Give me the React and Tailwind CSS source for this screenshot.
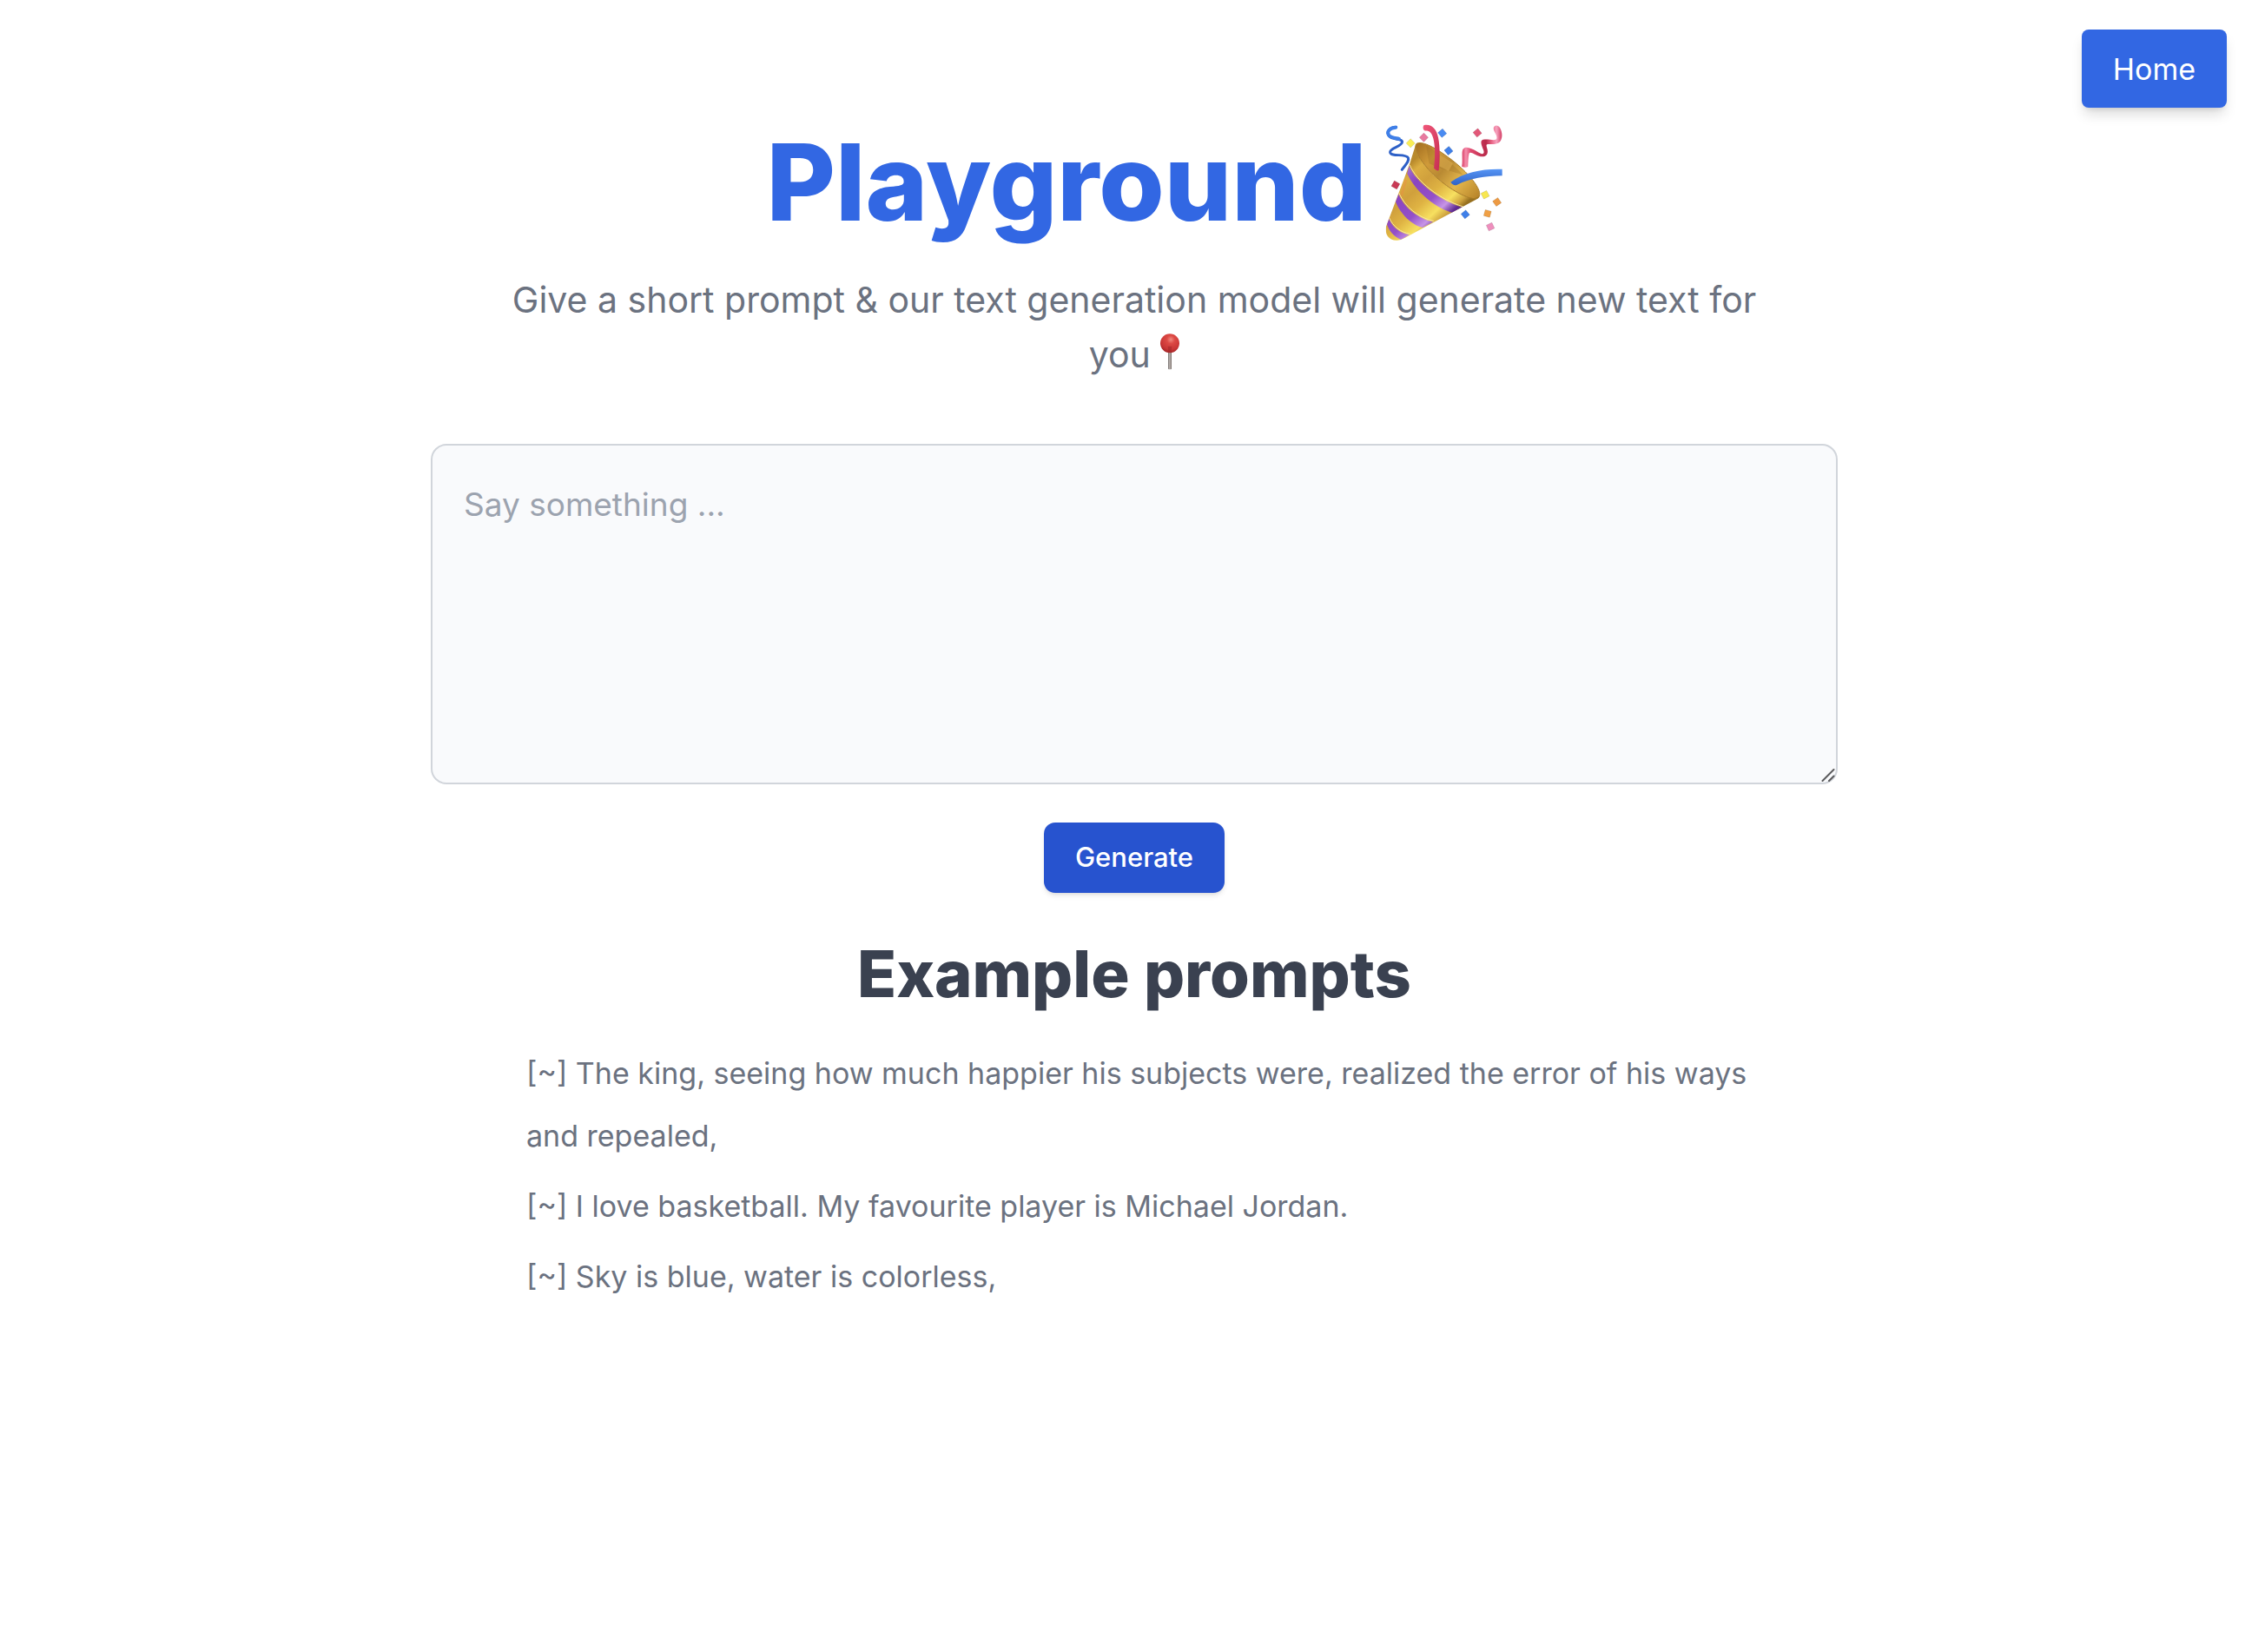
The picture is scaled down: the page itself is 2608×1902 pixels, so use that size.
const EXAMPLES = [
  "[~] The king, seeing how much happier his subjects were, realized the error of his ways and repealed,",
  "[~] I love basketball. My favourite player is Michael Jordan.",
  "[~] Sky is blue, water is colorless,",
];

const CONFETTI = [
  [198, 135, "#f9ee55", 45],
  [244, 115, "#e8799f", 45],
  [308, 100, "#4a8bf2", 50],
  [330, 161, "#3f7fe8", 50],
  [430, 99, "#e25878", 50],
  [146, 280, "#c93a56", 30],
  [457, 314, "#f8e750", 62],
  [498, 339, "#ed9a43", 55],
  [465, 379, "#f0a045", 15],
  [388, 382, "#3f7fe8", 50],
  [475, 425, "#ee8fbd", 65],
];

function PartyPopper() {
  return (
    <svg role="img" aria-label="party popper" viewBox="108 66 408 410" className="size-[136px] shrink-0">
      <defs>
        <linearGradient id="gold" gradientUnits="userSpaceOnUse" x1="150" y1="250" x2="308" y2="420">
          <stop offset="0" stopColor="#b98a2c" />
          <stop offset="0.12" stopColor="#dcae42" />
          <stop offset="0.34" stopColor="#d0a03c" />
          <stop offset="0.55" stopColor="#dfb343" />
          <stop offset="0.78" stopColor="#f7e060" />
          <stop offset="0.92" stopColor="#cfa33e" />
          <stop offset="1" stopColor="#97701f" />
        </linearGradient>
        <linearGradient id="inside" gradientUnits="userSpaceOnUse" x1="225" y1="140" x2="430" y2="320">
          <stop offset="0" stopColor="#a87322" />
          <stop offset="0.25" stopColor="#cf9a39" />
          <stop offset="0.45" stopColor="#b98a33" />
          <stop offset="0.7" stopColor="#e3b64b" />
          <stop offset="1" stopColor="#b9862b" />
        </linearGradient>
        <linearGradient id="violet" gradientUnits="userSpaceOnUse" x1="150" y1="250" x2="308" y2="420">
          <stop offset="0" stopColor="#a272cf" />
          <stop offset="0.25" stopColor="#8a45c0" />
          <stop offset="0.6" stopColor="#9450c8" />
          <stop offset="0.8" stopColor="#c795e6" />
          <stop offset="0.95" stopColor="#5f2a92" />
        </linearGradient>
        <linearGradient id="blueWave" x1="0" y1="0" x2="0" y2="1">
          <stop offset="0" stopColor="#5695f5" />
          <stop offset="1" stopColor="#2f62c6" />
        </linearGradient>
        <linearGradient id="redWave" x1="0" y1="0" x2="1" y2="1">
          <stop offset="0" stopColor="#f0577a" />
          <stop offset="1" stopColor="#c72f52" />
        </linearGradient>
        <linearGradient id="pinkWave" gradientUnits="userSpaceOnUse" x1="376" y1="0" x2="516" y2="0">
          <stop offset="0" stopColor="#d93a61" />
          <stop offset="0.1" stopColor="#f48fae" />
          <stop offset="0.22" stopColor="#e0496e" />
          <stop offset="0.6" stopColor="#b92a4a" />
          <stop offset="0.75" stopColor="#ec6a8b" />
          <stop offset="0.86" stopColor="#f6a3bf" />
          <stop offset="1" stopColor="#d23a60" />
        </linearGradient>
        <clipPath id="cone">
          <path d="M217 138C212 150 204 178 196 204L113 424C108 452 122 474 152 472C164 471 178 464 190 457L424 331C433 327 439 322 437 314C428 346 345 306 286 252C240 210 208 160 217 138Z" />
        </clipPath>
      </defs>

      <path d="M217 138C229 126 268 140 318 176C385 222 446 290 437 318C428 346 345 306 286 252C240 210 208 160 217 138Z" fill="url(#inside)" />
      <path d="M252 143C300 170 350 212 380 245C350 235 300 225 262 205Z" fill="#8f6321" opacity="0.25" />
      <path d="M300 175L345 205L330 232L298 215Z" fill="#e3b454" opacity="0.5" />

      <g clipPath="url(#cone)">
        <rect x="100" y="120" width="350" height="360" fill="url(#gold)" />
        <path d="M193 214C215 270 300 335 378 358L350 378C290 364 215 305 186 240Z" fill="url(#violet)" />
        <path d="M156 312C175 358 225 398 276 408L240 428C205 420 165 385 146 338Z" fill="url(#violet)" />
        <path d="M123 397C134 426 162 448 194 453L165 470C140 460 122 438 116 416Z" fill="url(#violet)" />
        <path d="M195 210C217 267 302 332 380 355M158 308C177 355 227 395 278 405M124 394C136 423 164 445 196 450" fill="none" stroke="#f7e7a4" strokeWidth="3" />
        <path d="M182 262L166 318" stroke="#ee8742" strokeWidth="9" opacity="0.35" />
      </g>
      <path d="M217 138C208 160 240 210 286 252C345 306 428 346 437 318C446 290 385 222 318 176C268 140 229 126 217 138Z" fill="none" stroke="#a87c26" strokeWidth="3" />

      <path d="M245 72C270 67 288 84 294 116C301 150 299 192 296 229C292 232 286 228 279 222C284 180 283 143 277 119C271 97 263 91 248 92C240 88 240 76 245 72Z" fill="url(#redWave)" />
      <path d="M337 270C385 235 447 223 516 225V248C455 249 405 257 360 279C351 284 343 278 337 270Z" fill="url(#blueWave)" />

      <path d="M148 79C126 80 113 94 122 109C133 126 168 116 169 130C169 147 125 151 127 166C130 185 181 168 190 186C194 198 180 210 168 227" fill="none" stroke="#2d60c7" strokeWidth="9" strokeLinecap="round" strokeLinejoin="round" />
      <path d="M147 80C126 81 115 94 122 106C129 117 146 117 158 120" fill="none" stroke="#3f7fe8" strokeWidth="12" strokeLinecap="round" />

      <path d="M376 216C380 194 374 165 380 156C390 140 418 158 440 170C450 175 455 170 451 159C442 137 437 123 455 122C476 121 494 129 497 118C499 105 487 97 486 84C486 71 502 70 508 81C517 96 518 119 508 130C495 143 472 136 463 139C457 143 470 159 464 172C457 185 439 183 426 176C412 168 404 164 401 171C398 184 398 203 397 217C390 220 382 219 376 216Z" fill="url(#pinkWave)" />

      {CONFETTI.map(([x, y, color, angle]) => (
        <g key={`${x}-${y}`} transform={`translate(${x} ${y}) rotate(${angle})`}>
          <rect x="-11" y="-11" width="22" height="22" rx="1" fill={color} stroke="#000" strokeOpacity="0.15" strokeWidth="2" />
        </g>
      ))}
    </svg>
  );
}

function RoundPin() {
  return (
    <svg role="img" aria-label="round pushpin" viewBox="0 0 66 126" className="inline-block h-[42px] w-[22px] align-[-3px]">
      <defs>
        <radialGradient id="ball" cx="0.55" cy="0.3" r="0.7">
          <stop offset="0" stopColor="#f08a80" />
          <stop offset="0.3" stopColor="#dd4a45" />
          <stop offset="0.75" stopColor="#c93636" />
          <stop offset="1" stopColor="#a32426" />
        </radialGradient>
        <linearGradient id="needle">
          <stop offset="0" stopColor="#6f6a68" />
          <stop offset="0.5" stopColor="#c4bdb9" />
          <stop offset="1" stopColor="#6b5f5b" />
        </linearGradient>
      </defs>
      <rect x="27" y="60" width="12" height="64" rx="3" fill="url(#needle)" />
      <circle cx="33" cy="34" r="33" fill="url(#ball)" />
      <path d="M26 44H40L38 62H28Z" fill="#9c2427" opacity="0.5" />
    </svg>
  );
}

function ResizeGrip() {
  return (
    <svg aria-hidden="true" viewBox="0 0 16 16" className="pointer-events-none absolute right-[3px] bottom-[3px] size-4">
      <path d="M1.5 15L14.5 2M9 15L14.5 9.5" fill="none" stroke="#5a5a5c" strokeWidth="2" strokeLinecap="round" />
    </svg>
  );
}

export default function App() {
  return (
    <div className="min-h-screen bg-white font-['Inter',sans-serif] text-[#6b7280]">
      <header className="flex justify-end px-11 pt-[34px]">
        <a href="#home" className="flex h-[90px] items-center rounded-lg bg-[#3267e3] px-9 text-[34px] text-white shadow-lg shadow-black/15">
          Home
        </a>
      </header>

      <div className="pl-1">
        <main className="mx-auto flex w-full max-w-[1620px] flex-col items-center">
          <h1 className="mt-[18px] flex items-center gap-5 text-[122px] leading-[136px] font-extrabold text-[#3267e3]">
            Playground
            <PartyPopper />
          </h1>
          <p className="mt-9 max-w-[1500px] text-center text-[41px] leading-[63px]">
            Give a short prompt &amp; our text generation model will generate new text for you <RoundPin />
          </p>

          <form className="mt-[71px] flex w-full flex-col items-center" onSubmit={(e) => e.preventDefault()}>
            <div className="relative w-full">
              <textarea
                aria-label="Prompt"
                placeholder="Say something ..."
                className="block h-[392px] w-full resize-y rounded-[18px] border-2 border-[#d1d5db] bg-[#f9fafc] px-9 py-10 text-[37px] leading-[56px] text-gray-700 placeholder:text-[#9ca3af] [&::-webkit-resizer]:bg-transparent"
              />
              <ResizeGrip />
            </div>
            <button type="submit" className="mt-11 flex h-[81px] items-center rounded-[13px] bg-[#2753cf] px-9 text-[31px] font-medium text-white shadow-md">
              Generate
            </button>
          </form>

          <h2 className="mt-12 text-[74px] leading-[90px] font-extrabold text-[#3a4150]">Example prompts</h2>
          <ul className="mt-[34px] flex w-full flex-col gap-[9px] pr-20 pl-[110px] text-[34px] leading-[72px]">
            {EXAMPLES.map((text) => (
              <li key={text}>{text}</li>
            ))}
          </ul>
        </main>
      </div>
    </div>
  );
}
